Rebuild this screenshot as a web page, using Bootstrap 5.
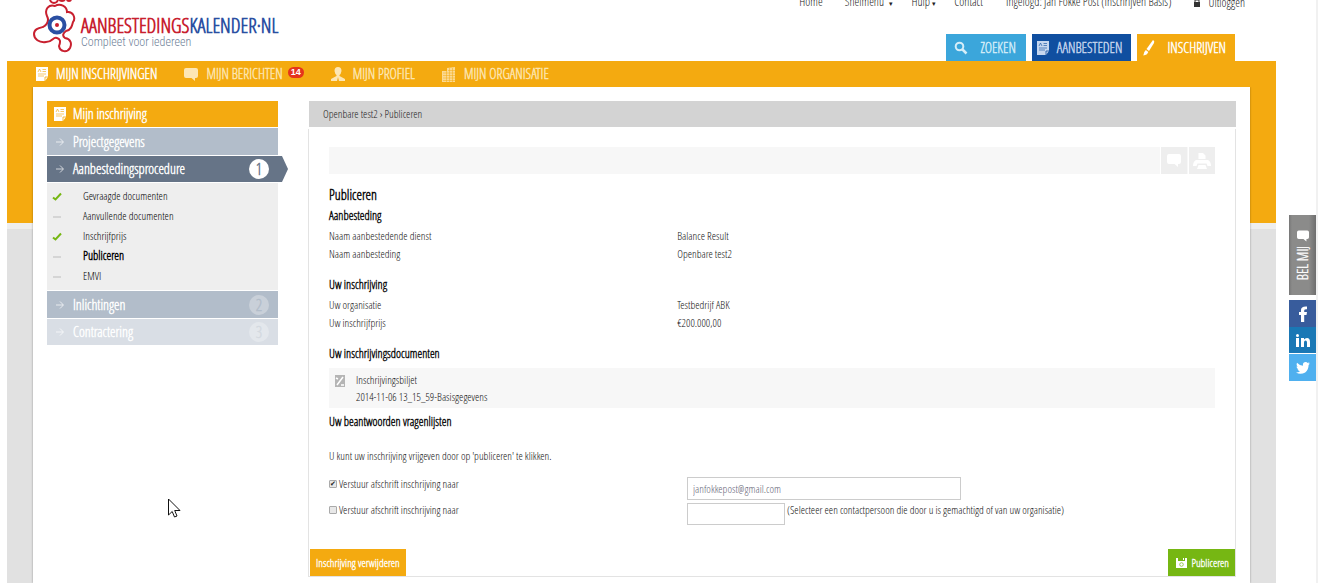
<!DOCTYPE html>
<html lang="nl">
<head>
<meta charset="utf-8">
<meta name="viewport" content="width=device-width, initial-scale=1">
<title>Aanbestedingskalender.nl - Publiceren</title>
<link href="https://cdn.jsdelivr.net/npm/bootstrap@5.3.0/dist/css/bootstrap.min.css" rel="stylesheet">
<script src="https://cdn.jsdelivr.net/npm/bootstrap@5.3.0/dist/js/bootstrap.bundle.min.js" defer></script>
<style>
:root { --abk-orange: #f4aa10; }
body { font-family: "Open Sans Condensed Light", "Roboto Condensed", sans-serif; font-size: 11px; line-height: 18px; color: #111; background: #fff; border-right: 2px solid #f1f1f1; overflow-x: hidden; }
a { text-decoration: none; color: inherit; }
svg { display: block; flex: none; }
.site-wrap { margin: 0 40px 0 7px; min-height: 100vh; }
.site-head { height: 61px; padding: 0 41px 0 26px; overflow: hidden; }
.brand-link { gap: 5px; }
.brand-name { font-size: 20px; line-height: 20px; font-weight: 700; color: #c8202f; padding-top: 16px; }
.brand-name b { color: #2b4fa2; }
.brand-sub { font: 300 12px/12px "Roboto Condensed", sans-serif; color: #6f7f98; }
.top-links { font-size: 12px; line-height: 18px; margin: -7px -10px 0 0; gap: 18px; color: #222; }
.top-links .user-info { margin: 0 5px; }
.top-links small { font-size: 7px; }
.tabs { gap: 6px; }
.tab-link { height: 27px; font-size: 14px; padding: 0 9px 0 5px; }
.tabs, .main-links, .side-item { -webkit-text-stroke: .4px currentColor; }
.tab-zoeken { background: #3ba6db; color: #d5edf8; padding: 0 10px 0 8px; }
.tab-aanb { background: #104fa0; color: #c6d6ee; --c: #104fa0; }
.tab-insch { background: var(--abk-orange); color: #fff; }
.tab-insch span { padding-left: 2px; }
.site-body { background: linear-gradient(var(--abk-orange) 162px, #eee 162px, #eee 168px, #e1e1e1 168px); }
.main-links { height: 26px; padding-left: 29px; font-size: 14px; gap: 27px; color: #fde6b4; }
.main-links .active { color: #fff; }
.count-pill { background: #e5341c; color: #fff; font: 700 9px/11px "Liberation Sans", sans-serif; border-radius: 6px; padding: 0 3px; margin: 0 0 3px -3px; -webkit-text-stroke: 0; }
.sheet { margin: 0 26px; background: #fff; padding: 14px 14px 0; box-shadow: 0 0 2px rgba(0,0,0,.35); clip-path: inset(0 -3px); }
.side { width: 231px; margin-right: 30px; font-size: 14px; }
.side-item { height: 26px; margin-bottom: 1px; padding: 0 9px 0 7px; color: #fff; background: #b2bdca; }
.side-item.tall { height: 27px; }
.side-item svg { margin-right: 7px; }
.side-item.head { background: var(--abk-orange); }
.side-item.open { background: #667487; margin-right: -10px; padding-right: 19px; clip-path: polygon(0 0, 235px 0, 241px 50%, 235px 100%, 0 100%); }
.side-item.dim { background: #d9dee5; }
.step { width: 20px; height: 20px; border-radius: 50%; line-height: 20px; text-align: center; font-size: 16px; background: #fff; color: #667487; }
.step.two { background: #c9d0d9; color: #b2bdca; }
.step.three { background: #e3e7ec; color: #d3d9e0; }
.sub-list { background: #eee; padding: 3px 0 4px 5px; margin-bottom: 1px; font-size: 11px; line-height: 20px; color: #000; }
.sub-list a { gap: 21px; }
.sub-list .fw-bold { font-size: 12px; }
.crumbs { height: 26px; margin-left: 1px; background: #d3d3d3; padding-left: 14px; color: #222; margin-bottom: 2px; }
.panel { border: 1px solid #e3e3e3; border-top: 0; padding: 18px 20px 0; }
.tools { background: #f7f7f7; height: 27px; gap: 1px; margin-bottom: 10px; }
.tools button { width: 27px; background: #eee; border: 0; border-left: 1px solid #fff; padding: 0; }
.panel h1 { font-size: 14px; line-height: 22px; font-weight: 700; margin: 0; }
.panel h2 { font-size: 12px; line-height: 20px; font-weight: 700; margin: 0 0 1px; }
.facts { width: 100%; margin-bottom: 12px; }
.facts th { font-weight: 300; width: 39.3%; padding: 0; }
.facts td { padding: 0; }
.doc-box { background: #f7f7f7; padding: 3px 0 3px 6px; gap: 11px; line-height: 17px; margin: 4px 0; }
.intro { padding-top: 14px; margin: 0 0 12px; }
.copy-row { line-height: 14px; }
.copy-row + .copy-row { margin-top: 3px; }
.copy-label { width: 40.4%; gap: 2px; }
.copy-label input { appearance: none; width: 8px; height: 8px; border: 1px solid #aaa; border-radius: 1px; background: #e8e8e8; margin: 0; position: relative; }
.copy-label input:checked::before { content: "✔"; position: absolute; left: 0; top: -3px; font: 7px/12px "DejaVu Sans", sans-serif; color: #222; }
.text-box { border: 1px solid #ccc; height: 23px; padding: 0 5px; color: #667; width: 274px; border-radius: 0; }
.text-box.short { width: 98px; height: 22px; margin-right: 2px; }
.actions { margin: 24px -20px 0; }
.actions button { border: 0; height: 27px; color: #fff; background: #76b713; padding: 0 6px; -webkit-text-stroke: .3px currentColor; }
.actions .remove { background: var(--abk-orange); margin-left: 1px; }
.share { position: fixed; right: 2px; top: 215px; width: 27px; }
.call-me { height: 80px; width: 27px; border: 0; background: linear-gradient(90deg, #777, #8b8b8a 3px, #8b8b8a 20px, #6e6e6e); color: #fff; font-size: 14px; padding: 0; margin-bottom: 5px; }
.call-me span { writing-mode: vertical-rl; transform: rotate(180deg); -webkit-text-stroke: .3px currentColor; }
.share a { height: 27px; }
.share .fb { background: #385c9c; }
.share .li { background: #1a78b5; border-bottom: 1px solid #fff; }
.share .tw { background: #4fb0ef; }
.pointer { position: absolute; left: 168px; top: 498px; }
</style>
</head>
<body>
<svg width="0" height="0" class="position-absolute" aria-hidden="true">
  <symbol id="i-doc" viewBox="0 0 12 14"><path d="M0 0h12v10l-3 4H0z" fill="currentColor" stroke="none"/><path d="M9 14v-4h3" fill="none" stroke="var(--c,#f4aa10)" stroke-width=".8"/><path d="M2 5l1.500-3L5 5M6.500 2.500H10M6.500 4.500H10M2 7h8M2 9h6" fill="none" stroke="var(--c,#f4aa10)" stroke-width=".9" opacity=".7"/></symbol>
  <symbol id="i-talk" viewBox="0 0 14 13"><path d="M2 0h10q2 0 2 2v6q0 2-2 2h-1v3L7.500 10H2Q0 10 0 8V2Q0 0 2 0z" fill="currentColor"/></symbol>
  <symbol id="i-arrow" viewBox="0 0 12 10"><path d="M2 5h7M6 1.500L9.500 5 6 8.500" fill="none" stroke="#fff" opacity=".7"/></symbol>
  <symbol id="i-ok" viewBox="0 0 10 10"><path d="M1 6.500l2.500 2L9 2.500" fill="none" stroke="#76b713" stroke-width="2"/></symbol>
  <symbol id="i-dash" viewBox="0 0 10 10"><path d="M1 6h8" stroke="#d5d5d5" stroke-width="2"/></symbol>
</svg>

<div class="site-wrap d-flex flex-column">
  <header class="site-head d-flex justify-content-between">
    <a href="#" class="brand-link d-flex align-items-start">
      <svg width="43" height="54" viewBox="0 0 43 54" fill="none" stroke="#c8202f" stroke-width="2">
        <path d="M14 16C11 9 16 4 22 6C27 3 34 6 34 12C40 11 43 18 40 22C39 26 38 30 33 31C30 33 29 36 32 38C38 39 39 44 37 48C34 53 27 52 26 46C28 41 27 39 24 38C20 36 20 42 13 42C6 43 1 39 1 34C1 29 6 28 10 27C15 24 16 20 14 16z"/>
        <circle cx="21" cy="-1" r="4"/><circle cx="29" cy="-2" r="3" fill="#fff"/><circle cx="36" cy="-1" r="2"/>
        <circle cx="24" cy="25" r="7.500" stroke="#2b4fa2" stroke-width="4" fill="#fff"/><circle cx="24" cy="25" r="2" fill="#c8202f" stroke="none"/>
      </svg>
      <span class="d-flex flex-column">
        <span class="brand-name">AANBESTEDINGS<b>KALENDER·NL</b></span>
        <span class="brand-sub">Compleet voor iedereen</span>
      </span>
    </a>
    <div class="d-flex flex-column justify-content-between align-items-end">
      <nav class="top-links d-flex">
        <a href="#">Home</a><a href="#" class="ms-1">Snelmenu &nbsp;<small>▾</small></a><a href="#">Hulp <small>▾</small></a><a href="#">Contact</a><span class="user-info">Ingelogd: Jan Fokke Post (Inschrijven Basis)</span>
        <a href="#" class="d-flex align-items-center gap-2"><svg width="6" height="8" viewBox="0 0 6 8"><path d="M0 3h6v5H0z" fill="#333"/><path d="M1 3V1h4v2" fill="none" stroke="#333"/></svg>Uitloggen</a>
      </nav>
      <nav class="tabs d-flex">
        <a href="#" class="tab-link tab-zoeken d-flex align-items-center gap-2"><svg width="14" height="14" viewBox="0 0 14 14" fill="none" stroke="currentColor" stroke-width="2"><circle cx="5.500" cy="5.500" r="3.800"/><path d="M8.500 8.500l4 4" stroke-width="2.500"/></svg><span class="ps-1">ZOEKEN</span></a>
        <a href="#" class="tab-link tab-aanb d-flex align-items-center gap-2"><svg width="12" height="14"><use href="#i-doc"/></svg>AANBESTEDEN</a>
        <a href="#" class="tab-link tab-insch d-flex align-items-center justify-content-between gap-2"><svg width="13" height="16" viewBox="0 0 13 16" fill="#fff"><path d="M11 0q2 1 1 3L7 11 4.500 9z"/><path d="M3.800 10l2.500 2q-1 3-5 3.500Q1.500 12 3.800 10z"/></svg><span class="ps-1">INSCHRIJVEN</span></a>
      </nav>
    </div>
  </header>

  <div class="site-body flex-grow-1 d-flex flex-column">
    <nav class="main-links d-flex align-items-center">
      <a href="#" class="active d-flex align-items-center gap-2"><svg width="12" height="14"><use href="#i-doc"/></svg>MIJN INSCHRIJVINGEN</a>
      <a href="#" class="d-flex align-items-center gap-2"><svg width="14" height="13"><use href="#i-talk"/></svg>MIJN BERICHTEN <span class="count-pill">14</span></a>
      <a href="#" class="d-flex align-items-center gap-2"><svg width="14" height="14" viewBox="0 0 14 14" fill="currentColor"><path d="M7 0q3.500 0 3.500 4Q10 7 8.500 8v1L14 12v2H0v-2l5.500-3V8Q4 7 3.500 4 3.500 0 7 0z"/><path d="M7 10l-1 4h2z" fill="#f4aa10"/></svg>MIJN PROFIEL</a>
      <a href="#" class="d-flex align-items-center gap-2"><svg width="14" height="15" viewBox="0 0 14 15"><path d="M5 1l8-1v15H0V4h5z" fill="currentColor" opacity=".8"/><path d="M1 6h12M1 8.500h12M1 11h12M1 13.500h12M6 3.500h7M4.500 4v11M7.500 1v14M10.500 1v14" stroke="#f4aa10" stroke-width=".5"/></svg>MIJN ORGANISATIE</a>
    </nav>

    <div class="sheet flex-grow-1 d-flex align-items-start">
      <aside class="side flex-shrink-0">
        <a href="#" class="side-item head d-flex align-items-center"><svg width="12" height="14"><use href="#i-doc"/></svg>Mijn inschrijving</a>
        <a href="#" class="side-item tall d-flex align-items-center"><svg width="12" height="10"><use href="#i-arrow"/></svg>Projectgegevens</a>
        <a href="#" class="side-item open d-flex align-items-center"><svg width="12" height="10"><use href="#i-arrow"/></svg>Aanbestedingsprocedure<span class="step ms-auto">1</span></a>
        <div class="sub-list">
          <a href="#" class="d-flex align-items-center"><svg width="10" height="10"><use href="#i-ok"/></svg>Gevraagde documenten</a>
          <a href="#" class="d-flex align-items-center"><svg width="10" height="10"><use href="#i-dash"/></svg>Aanvullende documenten</a>
          <a href="#" class="d-flex align-items-center"><svg width="10" height="10"><use href="#i-ok"/></svg>Inschrijfprijs</a>
          <a href="#" class="d-flex align-items-center fw-bold"><svg width="10" height="10"><use href="#i-dash"/></svg>Publiceren</a>
          <a href="#" class="d-flex align-items-center"><svg width="10" height="10"><use href="#i-dash"/></svg>EMVI</a>
        </div>
        <a href="#" class="side-item tall d-flex align-items-center"><svg width="12" height="10"><use href="#i-arrow"/></svg>Inlichtingen<span class="step two ms-auto">2</span></a>
        <a href="#" class="side-item dim d-flex align-items-center"><svg width="12" height="10"><use href="#i-arrow"/></svg>Contractering<span class="step three ms-auto">3</span></a>
      </aside>

      <main class="flex-grow-1">
        <div class="crumbs d-flex align-items-center">Openbare test2 › Publiceren</div>
        <form class="panel" onsubmit="return false">
          <div class="tools d-flex justify-content-end">
            <button type="button" aria-label="Berichten" class="d-flex align-items-center justify-content-center text-white"><svg width="14" height="13"><use href="#i-talk"/></svg></button>
            <button type="button" aria-label="Afdrukken" class="d-flex align-items-center justify-content-center"><svg width="18" height="16" viewBox="0 0 18 16" fill="#fff"><path d="M5.500 0H10l2.500 2.500V6h-7zM3 7h12q3 1.500 3 6h-3.500l-1-2.500h-9l-1 2.500H0q0-4.500 3-6zM5.500 12h7l1.500 4H4z"/></svg></button>
          </div>
          <h1>Publiceren</h1>
          <h2>Aanbesteding</h2>
          <table class="facts">
            <tr><th scope="row">Naam aanbestedende dienst</th><td>Balance Result</td></tr>
            <tr><th scope="row">Naam aanbesteding</th><td>Openbare test2</td></tr>
          </table>
          <h2>Uw inschrijving</h2>
          <table class="facts">
            <tr><th scope="row">Uw organisatie</th><td>Testbedrijf ABK</td></tr>
            <tr><th scope="row">Uw inschrijfprijs</th><td>€200.000,00</td></tr>
          </table>
          <h2>Uw inschrijvingsdocumenten</h2>
          <div class="doc-box d-flex">
            <svg class="mt-1" width="10" height="12" viewBox="0 0 10 12"><path d="M0 0h10v12H0z" fill="#b5b5b5"/><path d="M2 10L8 2M6 10h3M1 3l2 1" stroke="#fff" stroke-width="1.500"/></svg>
            <div>Inschrijvingsbiljet<br>2014-11-06 13_15_59-Basisgegevens</div>
          </div>
          <h2>Uw beantwoorden vragenlijsten</h2>
          <p class="intro">U kunt uw inschrijving vrijgeven door op 'publiceren' te klikken.</p>
          <div class="copy-row d-flex align-items-start">
            <div class="copy-label d-flex align-items-center"><input type="checkbox" id="copy1" checked><label for="copy1">Verstuur afschrift inschrijving naar</label></div>
            <input type="email" class="text-box" aria-label="E-mailadres" value="janfokkepost@gmail.com">
          </div>
          <div class="copy-row d-flex align-items-start">
            <div class="copy-label d-flex align-items-center"><input type="checkbox" id="copy2"><label for="copy2">Verstuur afschrift inschrijving naar</label></div>
            <input type="text" class="text-box short" id="contact"><label for="contact">(Selecteer een contactpersoon die door u is gemachtigd of van uw organisatie)</label>
          </div>
          <div class="actions d-flex justify-content-between">
            <button type="button" class="remove">Inschrijving verwijderen</button>
            <button type="submit" class="d-flex align-items-center gap-1 ps-2"><svg width="11" height="10" viewBox="0 0 11 10"><path d="M0 0h2v3h7V0h2v10H0z" fill="#fff"/><path d="M7 0h1v2H7z" fill="#fff"/><circle cx="5.500" cy="6.500" r="1.800" fill="none" stroke="#76b713" stroke-width=".7"/></svg>Publiceren</button>
          </div>
        </form>
      </main>
    </div>
  </div>
</div>

<aside class="share d-flex flex-column">
  <button type="button" class="call-me d-flex flex-column align-items-center justify-content-center gap-1"><svg width="12" height="12"><use href="#i-talk"/></svg><span>BEL MIJ</span></button>
  <a href="#" aria-label="Facebook" class="fb d-flex align-items-center justify-content-center"><svg width="10" height="16" viewBox="0 0 10 16"><path d="M3 16V9H1V6h2V4q0-4 6-3.500V3.200Q6.200 3 6.200 4.500V6H9l-.5 3H6.200v7z" fill="#fff"/></svg></a>
  <a href="#" aria-label="LinkedIn" class="li d-flex align-items-center justify-content-center"><svg width="14" height="13" viewBox="0 0 14 13" fill="#fff"><path d="M0 4h3v9H0zM5 4h3v1.500Q9 4 11 4q3 0 3 4v5h-3V8.500Q11 6.500 9.500 6.500T8 8.500V13H5z"/><circle cx="1.500" cy="1.500" r="1.500"/></svg></a>
  <a href="#" aria-label="Twitter" class="tw d-flex align-items-center justify-content-center"><svg width="14" height="12" viewBox="0 0 14 12"><path d="M0 10.500q2.500 0 4-1.200-2-.3-2.500-2h1Q.6 6.500.5 4.500l1.200.3Q0 3.500 1 .8 3.500 3.600 7 3.700 6.500 0 9.700 0q1.200 0 2 .9L13.500.3l-1 1.500L14 1.500l-1.400 1.600Q12.600 8 9.200 10.400 4.500 13.200 0 10.500z" fill="#fff"/></svg></a>
</aside>
<svg class="pointer" width="13" height="20" viewBox="0 0 13 20"><path d="M.5 1v16l3.700-3.500L6.500 19l2.500-1-2.300-5.500H12z" fill="#fff" stroke="#111"/></svg>
</body>
</html>
